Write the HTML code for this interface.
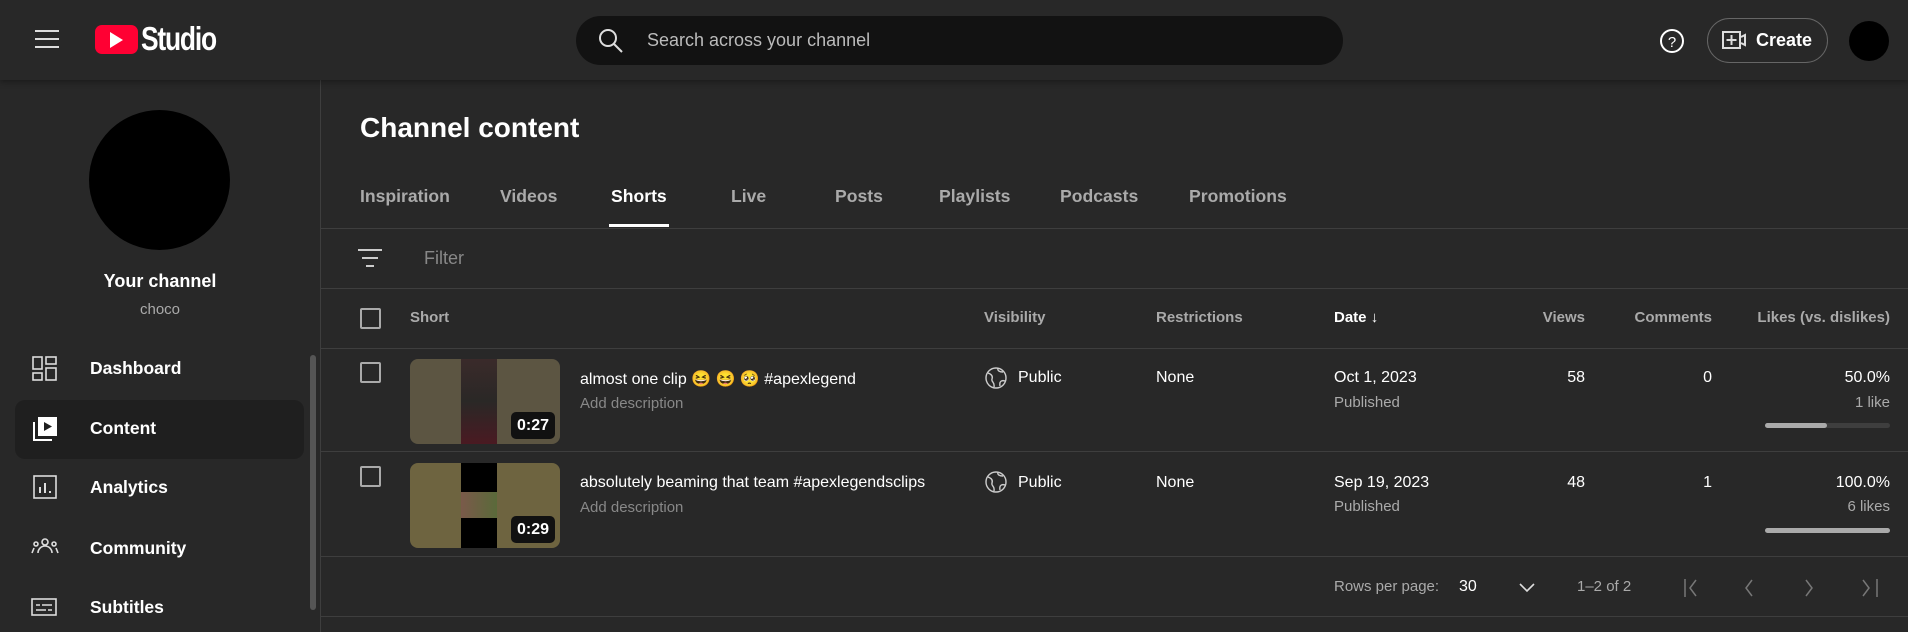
<!DOCTYPE html>
<html><head><meta charset="utf-8"><style>
*{margin:0;padding:0;box-sizing:border-box}
body{width:1908px;height:632px;overflow:hidden;background:#282828;font-family:"Liberation Sans",sans-serif;color:#fff;position:relative}
.a{position:absolute;white-space:nowrap}
.sec{color:#aaa}
.line{position:absolute;left:321px;right:0;height:1px;background:#3e3e3e}
.cb{position:absolute;width:21px;height:21px;border:2px solid #aaa;border-radius:2px}
.tab{position:absolute;top:186px;font-size:17.6px;color:#aaa;font-weight:bold}
.hd{position:absolute;top:309px;font-size:15px;color:#aaa;font-weight:bold}
.nav{position:absolute;left:90px;font-size:17.5px;font-weight:bold}
.t{font-size:16px}
.dur{position:absolute;width:44px;height:27px;background:#111;border-radius:5px;font-size:16px;font-weight:bold;text-align:center;line-height:27px}
</style></head><body>
<div class="a" style="left:0;top:0;width:1908px;height:2px;background:#4a3434"></div>
<div class="a" style="left:0;top:0;width:1908px;height:80px;background:#282828;box-shadow:0 2px 6px rgba(0,0,0,.35);z-index:2">
 <svg class="a" style="left:35px;top:29px" width="24" height="20"><path d="M0 2h24M0 10h24M0 18h24" stroke="#ddd" stroke-width="2"/></svg>
 <div class="a" style="left:95px;top:25px;width:43px;height:29px;background:#ff0033;border-radius:7px"></div>
 <svg class="a" style="left:110px;top:32px" width="14" height="16"><path d="M0 0L13 8L0 16Z" fill="#fff"/></svg>
 <div class="a" style="left:141px;top:20px;font-size:33px;font-weight:bold;letter-spacing:-1.5px;transform:scaleX(.8);transform-origin:left">Studio</div>
 <div class="a" style="left:576px;top:16px;width:767px;height:49px;background:#121212;border-radius:25px"></div>
 <svg class="a" style="left:598px;top:28px" width="26" height="26"><circle cx="10" cy="10" r="8" fill="none" stroke="#ddd" stroke-width="2"/><path d="M16 16l8 8" stroke="#ddd" stroke-width="2"/></svg>
 <div class="a sec" style="left:647px;top:30px;font-size:18px;color:#bbb">Search across your channel</div>
 <svg class="a" style="left:1659px;top:28px" width="26" height="26"><circle cx="13" cy="13" r="11" fill="none" stroke="#fff" stroke-width="2"/><text x="13" y="19" text-anchor="middle" font-size="15" fill="#fff" font-family="Liberation Sans">?</text></svg>
 <div class="a" style="left:1707px;top:18px;width:121px;height:45px;border:1px solid #666;border-radius:23px"></div>
 <svg class="a" style="left:1722px;top:30px" width="24" height="20"><rect x="1" y="2" width="17" height="16" fill="none" stroke="#ddd" stroke-width="2"/><path d="M9.5 5v10M4.5 10h10M19 7l4-2v10l-4-2" stroke="#ddd" stroke-width="2" fill="none"/></svg>
 <div class="a" style="left:1756px;top:30px;font-size:18px;font-weight:bold">Create</div>
 <div class="a" style="left:1849px;top:21px;width:40px;height:40px;border-radius:50%;background:#000"></div>
</div>
<div class="a" style="left:320px;top:80px;width:1px;height:552px;background:#3e3e3e"></div>
<div class="a" style="left:89px;top:110px;width:141px;height:140px;border-radius:50%;background:#000"></div>
<div class="a" style="left:0;width:320px;text-align:center;top:271px;font-size:18px;font-weight:bold">Your channel</div>
<div class="a sec" style="left:0;width:320px;text-align:center;top:301px;font-size:15px">choco</div>
<div class="a" style="left:15px;top:400px;width:289px;height:59px;background:#1f1f1f;border-radius:10px"></div>
<svg class="a" style="left:32px;top:356px" width="26" height="26" fill="none" stroke="#ddd" stroke-width="1.6"><rect x="1" y="1" width="9" height="12"/><rect x="14" y="1" width="10" height="7"/><rect x="1" y="17" width="9" height="7"/><rect x="14" y="12" width="10" height="12"/></svg>
<div class="nav" style="top:358px">Dashboard</div>
<svg class="a" style="left:32px;top:416px" width="26" height="26"><path d="M2 6v18h18" fill="none" stroke="#fff" stroke-width="2"/><rect x="6" y="1" width="19" height="19" fill="#fff"/><path d="M12 6l8 4.5-8 4.5z" fill="#1f1f1f"/></svg>
<div class="nav" style="top:418px">Content</div>
<svg class="a" style="left:33px;top:475px" width="24" height="24" fill="none" stroke="#ddd" stroke-width="1.6"><rect x="1" y="1" width="22" height="22"/><path d="M7 18v-6M12 18V8M17 18v-2" stroke-width="2"/></svg>
<div class="nav" style="top:477px">Analytics</div>
<svg class="a" style="left:31px;top:538px" width="28" height="16" fill="none" stroke="#ddd" stroke-width="1.6"><circle cx="14" cy="4" r="3"/><path d="M7 15a7 7 0 0 1 14 0"/><circle cx="5" cy="6" r="2"/><circle cx="23" cy="6" r="2"/><path d="M1 15l2-5M27 15l-2-5"/></svg>
<div class="nav" style="top:538px">Community</div>
<svg class="a" style="left:31px;top:598px" width="26" height="18" fill="none" stroke="#ddd" stroke-width="1.6"><rect x="1" y="1" width="24" height="16"/><path d="M5 7h4M11 7h10M5 12h10M17 12h4"/></svg>
<div class="nav" style="top:597px">Subtitles</div>
<div class="a" style="left:310px;top:355px;width:6px;height:255px;background:#555;border-radius:3px"></div>

<div class="a" style="left:360px;top:112px;font-size:28px;font-weight:bold">Channel content</div>
<div class="tab" style="left:360px">Inspiration</div>
<div class="tab" style="left:500px">Videos</div>
<div class="tab" style="left:611px;color:#fff">Shorts</div>
<div class="tab" style="left:731px">Live</div>
<div class="tab" style="left:835px">Posts</div>
<div class="tab" style="left:939px">Playlists</div>
<div class="tab" style="left:1060px">Podcasts</div>
<div class="tab" style="left:1189px">Promotions</div>
<div class="a" style="left:609px;top:224px;width:60px;height:3px;background:#fff"></div>
<div class="line" style="top:228px"></div>
<svg class="a" style="left:358px;top:249px" width="24" height="18"><path d="M0 1h24M4 9h16M8 17h8" stroke="#ccc" stroke-width="2"/></svg>
<div class="a" style="left:424px;top:248px;font-size:18px;color:#888">Filter</div>
<div class="line" style="top:288px"></div>
<div class="cb" style="left:360px;top:308px"></div>
<div class="hd" style="left:410px">Short</div>
<div class="hd" style="left:984px">Visibility</div>
<div class="hd" style="left:1156px">Restrictions</div>
<div class="hd" style="left:1334px;color:#fff">Date <span style="font-weight:normal">↓</span></div>
<div class="hd" style="left:1500px;width:85px;text-align:right">Views</div>
<div class="hd" style="left:1600px;width:112px;text-align:right">Comments</div>
<div class="hd" style="left:1700px;width:190px;text-align:right">Likes (vs. dislikes)</div>
<div class="line" style="top:348px"></div>

<!-- row1 -->
<div class="cb" style="left:360px;top:362px"></div>
<div class="a" style="left:410px;top:359px;width:150px;height:85px;background:#5c5542;border-radius:8px;overflow:hidden"><div class="a" style="left:51px;top:0;width:36px;height:85px;background:linear-gradient(#3a2a2a,#2a2826 50%,#4a1a22)"></div></div>
<div class="dur" style="left:511px;top:412px">0:27</div>
<div class="a t" style="left:580px;top:369px">almost one clip 😆 😆 🥺 #apexlegend</div>
<div class="a sec" style="left:580px;top:395px;font-size:15px;color:#888">Add description</div>
<svg class="a" style="left:985px;top:367px" width="22" height="22" fill="none" stroke="#ccc" stroke-width="1.4"><circle cx="11" cy="11" r="10"/><path d="M3 6c3 1 5 3 4 6s3 3 2 8M13 1c-1 3 2 4 5 4M20 14c-3-1-6 0-5 5"/></svg>
<div class="a t" style="left:1018px;top:369px">Public</div>
<div class="a t" style="left:1156px;top:369px">None</div>
<div class="a t" style="left:1334px;top:369px">Oct 1, 2023</div>
<div class="a sec" style="left:1334px;top:394px;font-size:15px">Published</div>
<div class="a t" style="left:1500px;width:85px;text-align:right;top:369px">58</div>
<div class="a t" style="left:1600px;width:112px;text-align:right;top:369px">0</div>
<div class="a t" style="left:1700px;width:190px;text-align:right;top:369px">50.0%</div>
<div class="a sec" style="left:1700px;width:190px;text-align:right;top:394px;font-size:15px">1 like</div>
<div class="a" style="left:1765px;top:423px;width:125px;height:5px;background:#3e3e3e;border-radius:3px"><div style="width:62px;height:5px;background:#aaa;border-radius:3px"></div></div>
<div class="line" style="top:451px"></div>

<!-- row2 -->
<div class="cb" style="left:360px;top:466px"></div>
<div class="a" style="left:410px;top:463px;width:150px;height:85px;background:#6e6440;border-radius:8px;overflow:hidden"><div class="a" style="left:51px;top:0;width:36px;height:85px;background:#000"><div style="margin-top:29px;height:26px;background:linear-gradient(90deg,#7a5a4a,#5a6a3a)"></div></div></div>
<div class="dur" style="left:511px;top:516px">0:29</div>
<div class="a t" style="left:580px;top:474px">absolutely beaming that team #apexlegendsclips</div>
<div class="a sec" style="left:580px;top:499px;font-size:15px;color:#888">Add description</div>
<svg class="a" style="left:985px;top:471px" width="22" height="22" fill="none" stroke="#ccc" stroke-width="1.4"><circle cx="11" cy="11" r="10"/><path d="M3 6c3 1 5 3 4 6s3 3 2 8M13 1c-1 3 2 4 5 4M20 14c-3-1-6 0-5 5"/></svg>
<div class="a t" style="left:1018px;top:474px">Public</div>
<div class="a t" style="left:1156px;top:474px">None</div>
<div class="a t" style="left:1334px;top:474px">Sep 19, 2023</div>
<div class="a sec" style="left:1334px;top:498px;font-size:15px">Published</div>
<div class="a t" style="left:1500px;width:85px;text-align:right;top:474px">48</div>
<div class="a t" style="left:1600px;width:112px;text-align:right;top:474px">1</div>
<div class="a t" style="left:1700px;width:190px;text-align:right;top:474px">100.0%</div>
<div class="a sec" style="left:1700px;width:190px;text-align:right;top:498px;font-size:15px">6 likes</div>
<div class="a" style="left:1765px;top:528px;width:125px;height:5px;background:#aaa;border-radius:3px"></div>
<div class="line" style="top:556px"></div>

<div class="a sec" style="left:1334px;top:578px;font-size:15px">Rows per page:</div>
<div class="a t" style="left:1459px;top:578px">30</div>
<svg class="a" style="left:1519px;top:583px" width="16" height="10"><path d="M1 1l7 7 7-7" fill="none" stroke="#ddd" stroke-width="1.6"/></svg>
<div class="a sec" style="left:1577px;top:578px;font-size:15px">1–2 of 2</div>
<svg class="a" style="left:1684px;top:578px" width="210" height="20" fill="none" stroke="#777" stroke-width="1.5"><path d="M1 1v18M12 2l-6 8 6 8M68 2l-6 8 6 8M122 2l6 8-6 8M179 2l6 8-6 8M193 1v18"/></svg>
<div class="line" style="top:616px"></div>
</body></html>
